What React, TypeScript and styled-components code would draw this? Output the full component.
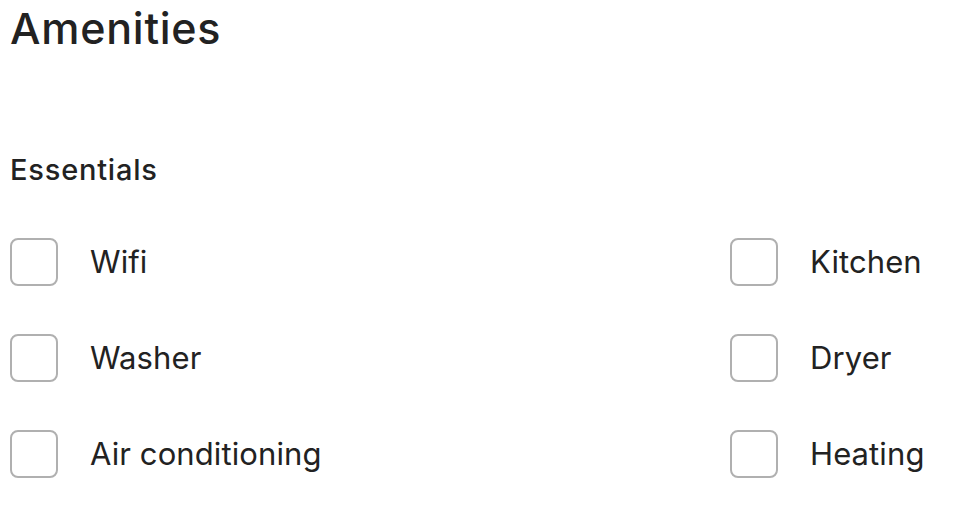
import React from "react";
import styled, { createGlobalStyle } from "styled-components";

const Global = createGlobalStyle`
  html, body { margin: 0; padding: 0; background: #ffffff; }
  body { font-family: Inter, "Noto Sans", sans-serif; color: #222222; }
`;

const Page = styled.main`
  padding: 0 10px;
`;

const Title = styled.h1`
  margin: 0;
  padding-top: 4px;
  font-size: 43px;
  line-height: 48px;
  font-weight: 500;
  letter-spacing: 0.75px;
`;

const Section = styled.section`
  margin-top: 100px;
`;

const SectionTitle = styled.h2`
  margin: 0;
  font-size: 29px;
  line-height: 36px;
  font-weight: 500;
  letter-spacing: 0.8px;
`;

const Grid = styled.div`
  margin-top: 50px;
  display: grid;
  grid-template-columns: 720px 1fr;
  row-gap: 48px;
`;

const Item = styled.label`
  display: flex;
  align-items: center;
  gap: 32px;
  height: 48px;
  cursor: pointer;
`;

const Box = styled.input.attrs({ type: "checkbox" })`
  appearance: none;
  margin: 0;
  width: 48px;
  height: 48px;
  flex: none;
  border: 2px solid #b0b0b0;
  border-radius: 8px;
  background: #ffffff;
  box-sizing: border-box;
`;

const Label = styled.span`
  font-size: 31px;
  line-height: 40px;
  font-weight: 400;
  letter-spacing: 0.1px;
`;

const items = ["Wifi", "Kitchen", "Washer", "Dryer", "Air conditioning", "Heating"];

export default function App() {
  return (
    <>
      <Global />
      <Page>
        <Title>Amenities</Title>
        <Section>
          <SectionTitle>Essentials</SectionTitle>
          <Grid>
            {items.map((name) => (
              <Item key={name}>
                <Box />
                <Label>{name}</Label>
              </Item>
            ))}
          </Grid>
        </Section>
      </Page>
    </>
  );
}
